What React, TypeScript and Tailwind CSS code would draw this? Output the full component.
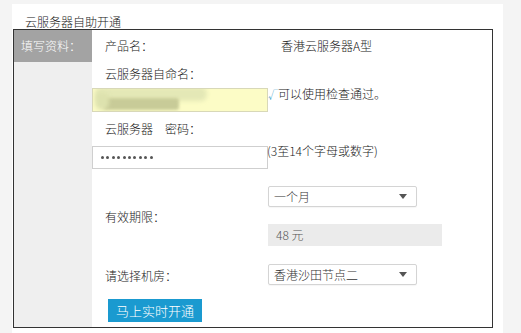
import React from "react";

const font = { fontFamily: '"Microsoft YaHei", "Noto Sans CJK SC", "Noto Sans", sans-serif' };

function Arrow() {
  return (
    <svg width="8" height="5" viewBox="0 0 8 5" className="block">
      <path d="M0 0 L8 0 L4 5 Z" fill="#555" />
    </svg>
  );
}

function Select({ text }: { text: string }) {
  return (
    <div className="w-[149px] h-[21px] border border-[#d4d4d4] rounded-[2px] bg-white flex items-center justify-between pl-[5px] pr-[9px] shadow-[0_1px_1px_rgba(0,0,0,0.04)]">
      <span className="text-[12px] text-[#333] leading-[14px]">{text}</span>
      <Arrow />
    </div>
  );
}

export default function App() {
  return (
    <div className="w-[521px] h-[333px] bg-[#f4f4f4] overflow-hidden pt-[4px] font-light" style={font}>
      <div className="ml-[12px] w-[491px] h-[329px] bg-white flex flex-col">
        <div className="h-[25px] flex items-center pl-[13px] text-[12px] text-[#222] pt-[10px]">
          云服务器自助开通
        </div>
        <div className="ml-[1px] w-[480px] h-[299px] border border-[#333] flex text-[12px] text-[#222]">
          <div className="w-[78px] bg-[#efefef] flex flex-col">
            <div className="h-[32px] bg-[#a3a3a3] text-white flex items-center pl-[7px]">
              填写资料：
            </div>
          </div>
          <div className="flex-1 flex flex-col">
            <div className="h-[32px] flex items-center">
              <span className="w-[176px] pl-[13px]">产品名：</span>
              <span className="pl-[13px]">香港云服务器A型</span>
            </div>
            <div className="h-[24px] flex items-center pl-[13px]">云服务器自命名：</div>
            <div className="mt-[2px] flex items-start">
              <div className="relative w-[176px] h-[24px] bg-[#fcfcc6] border border-[#d8d8b8] overflow-hidden">
                <div className="absolute left-[2px] top-[-2px] w-[112px] h-[14px] bg-[#e4e8b6] rounded-[6px] blur-[2px]" />
                <div className="absolute left-[10px] top-[9px] w-[76px] h-[12px] bg-[#c8cb98] rounded-[3px] blur-[1.5px]" />
                <div className="absolute left-[2px] top-[3px] w-[14px] h-[18px] bg-[#dde2ae] rounded-full blur-[2px]" />
              </div>
              <span className="-mt-[2px] leading-[16px]">
                <span className="text-[#3aa0c8] text-[10px]">√</span>可以使用检查通过。
              </span>
            </div>
            <div className="h-[34px] flex items-center pl-[13px]">云服务器　密码：</div>
            <div className="flex items-start">
              <div className="w-[176px] h-[23px] bg-white border border-[#cfcfcf] flex items-center pl-[8px] gap-[2.4px]">
                {Array.from({ length: 10 }).map((_, i) => (
                  <div key={i} className="w-[3px] h-[3px] rounded-full bg-[#555]" />
                ))}
              </div>
              <span className="-mt-[3px] leading-[16px] -ml-[1px]">(3至14个字母或数字)</span>
            </div>
            <div className="mt-[17px] flex items-center">
              <span className="w-[176px] pl-[13px] pt-[2px]">有效期限：</span>
              <div className="flex flex-col">
                <Select text="一个月" />
                <div className="mt-[17px] w-[174px] h-[22px] bg-[#ebebeb] flex items-center pl-[8px] text-[#555]">
                  48 元
                </div>
              </div>
            </div>
            <div className="mt-[18px] flex items-center">
              <span className="w-[176px] pl-[13px] pt-[3px]">请选择机房：</span>
              <Select text="香港沙田节点二" />
            </div>
            <div className="mt-[14px] ml-[16px] w-[94px] h-[23px] bg-[#1a9ad0] text-white text-[13px] flex items-center justify-center">
              马上实时开通
            </div>
          </div>
        </div>
      </div>
    </div>
  );
}
